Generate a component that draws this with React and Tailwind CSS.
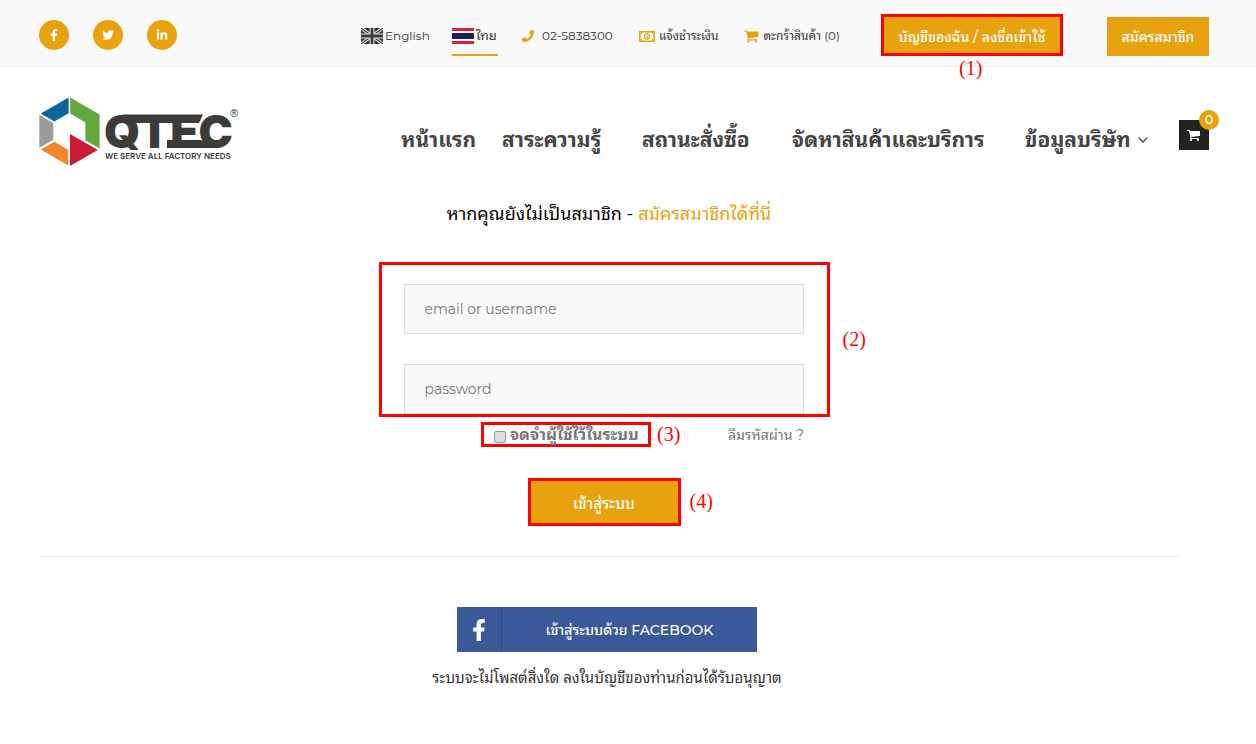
import { FaFacebookF, FaTwitter, FaLinkedinIn, FaPhone } from "react-icons/fa";
import { ChevronDown } from "lucide-react";

const socials = [
  { label: "Facebook", Icon: FaFacebookF },
  { label: "Twitter", Icon: FaTwitter },
  { label: "LinkedIn", Icon: FaLinkedinIn },
];

function CartIcon({ className }) {
  return (
    <svg className={className} viewBox="0 0 1792 1792" fill="currentColor" aria-hidden="true">
      <path d="M640 1536q0 52-38 90t-90 38-90-38-38-90 38-90 90-38 90 38 38 90zm896 0q0 52-38 90t-90 38-90-38-38-90 38-90 90-38 90 38 38 90zm128-1088v512q0 24-16.5 42.5t-40.5 21.5l-1044 122q13 60 13 70 0 16-24 64h920q26 0 45 19t19 45-19 45-45 19h-1024q-26 0-45-19t-19-45q0-11 8-31.5t16-36 21.5-40 15.500-29.5l-177-823h-204q-26 0-45-19t-19-45 19-45 45-19h256q16 0 28.5 6.500t19.500 15.500 13 24.500 8 26 5.500 29.500 4.500 26h1201q26 0 45 19t19 45z" />
    </svg>
  );
}

function UkFlag() {
  return (
    <svg className="h-4 w-[22px] shrink-0" viewBox="0 0 22 16" aria-hidden="true">
      <rect width="22" height="16" fill="#333" />
      <path d="M0 0L22 16M22 0L0 16" stroke="#ddd" strokeWidth="3.4" />
      <path d="M0 0L22 16M22 0L0 16" stroke="#444" strokeWidth="1.1" />
      <path d="M11 0V16M0 8H22" stroke="#e6e6e6" strokeWidth="5" />
      <path d="M11 0V16M0 8H22" stroke="#3a3a3a" strokeWidth="2.8" />
    </svg>
  );
}

function ThaiFlag() {
  return (
    <svg className="h-4 w-[22px] shrink-0" viewBox="0 0 22 16" aria-hidden="true">
      <rect width="22" height="16" fill="#e01f36" />
      <rect y="3" width="22" height="10" fill="#fff" />
      <rect y="5" width="22" height="6" fill="#211f52" />
    </svg>
  );
}

function MoneyIcon() {
  return (
    <svg className="h-[11px] w-4 shrink-0" viewBox="0 0 16 11" fill="none" stroke="#e8a20e" aria-hidden="true">
      <rect x="0.75" y="0.75" width="14.5" height="9.5" strokeWidth="1.5" />
      <ellipse cx="8" cy="5.5" rx="2.4" ry="3" strokeWidth="1.2" />
      <path d="M7.2 4.3L8.2 3.8V7M7 7.1H9.3" strokeWidth="0.9" />
      <path d="M1 3.2Q3 3.2 3 1M13 1Q13 3.2 15 3.2M1 7.8Q3 7.8 3 10M13 10Q13 7.8 15 7.8" />
    </svg>
  );
}

function Logo() {
  return (
    <svg className="h-[72px] w-[202px]" viewBox="0 0 202 72" role="img" aria-label="QTEC">
      <path d="M29.6 1.5V17.2L15.3 25.5L1.8 17.6Z" fill="#0d659c" />
      <path d="M31.2 1.5L60.6 18.5V52.5L46.4 44.3V26.5L31.2 17.5Z" fill="#63a83d" />
      <path d="M0.3 19L14.3 27V44L0.3 51.8Z" fill="#9c9b9c" />
      <path d="M15.3 45.8L29.2 53.8V69.5L1.8 53.6Z" fill="#f18829" />
      <path d="M31 38L58.8 54L31 70Z" fill="#cb1a35" />
      <path d="M84 18.5H164L160 27H80Z" fill="#3b3b3a" />
      <path d="M128 44H162L176 52H128Z" fill="#3b3b3a" />
      <text x="65" y="52" className="font-[Inter,sans-serif] text-[46px] font-black" fill="#3b3b3a">QTEC</text>
      <text x="66" y="63" className="font-[Inter,sans-serif] text-[8px] font-semibold" fill="#3b3b3a">WE SERVE ALL FACTORY NEEDS</text>
      <text x="191" y="21" className="font-['Liberation_Sans',sans-serif] text-[11px]" fill="#3b3b3a">®</text>
    </svg>
  );
}

function Mark({ className, children }) {
  return <span className={`absolute font-['Liberation_Serif',serif] text-xl leading-6 font-normal text-[#f00] ${className}`}>{children}</span>;
}

export default function App() {
  return (
    <div className="min-h-screen bg-white font-[Montserrat,'Noto_Sans_Thai_Looped',Loma,Waree,'Noto_Sans',sans-serif] text-[#333]">
      <header>
        <div className="flex h-[67px] items-start border-b border-[#ebebeb] bg-[#f9f9f9] pr-[47px] pl-[39px]">
          <div className="flex w-[322px] shrink-0 gap-6 pt-5">
            {socials.map(({ label, Icon }) => (
              <a key={label} href="#" aria-label={label} className="flex size-[30px] items-center justify-center rounded-full bg-[#e8a20e] text-white">
                <Icon className="size-3" />
              </a>
            ))}
          </div>
          <nav className="flex h-14 gap-6 pt-[18px] text-xs whitespace-nowrap">
            <a href="#" className="flex h-9 w-[67px] items-center gap-0.5"><UkFlag />English</a>
            <a href="#" className="flex h-[38px] w-[46px] items-center gap-0.5 border-b-2 border-[#e8a20e] text-[13px]"><ThaiFlag />ไทย</a>
            <a href="#" className="flex h-9 w-[93px] items-center gap-2"><FaPhone className="size-3 text-[#e8a20e]" />02-5838300</a>
            <a href="#" className="flex h-9 w-[81px] items-center gap-1"><MoneyIcon />แจ้งชำระเงิน</a>
            <a href="#" className="flex h-9 w-24 items-center gap-1"><CartIcon className="size-4 text-[#e8a20e]" />ตะกร้าสินค้า (0)</a>
          </nav>
          <div className="ml-auto flex shrink-0 items-start gap-11 pt-3.5 text-sm font-medium whitespace-nowrap text-white">
            <div className="relative">
              <button className="h-[42px] w-[182px] border-3 border-[#f00] bg-[#e8a20e] pt-1">บัญชีของฉัน / ลงชื่อเข้าใช้</button>
              <Mark className="top-[42px] left-[78px]">(1)</Mark>
            </div>
            <button className="mt-[3px] h-[39px] w-[102px] bg-[#e8a20e]">สมัครสมาชิก</button>
          </div>
        </div>
        <div className="flex items-start justify-between pt-[29px] pr-[47px] pl-[39px]">
          <a href="#"><Logo /></a>
          <div className="flex items-start pt-6">
            <nav className="flex h-10 items-center text-[21px] leading-9 font-bold whitespace-nowrap text-[#444]">
              <a href="#" className="w-[101px]">หน้าแรก</a>
              <a href="#" className="w-[140px]">สาระความรู้</a>
              <a href="#" className="w-[150px]">สถานะสั่งซื้อ</a>
              <a href="#" className="w-[233px]">จัดหาสินค้าและบริการ</a>
              <a href="#" className="flex w-[154px] items-center gap-1">ข้อมูลบริษัท <ChevronDown className="size-4" /></a>
            </nav>
            <a href="#" aria-label="ตะกร้าสินค้า" className="relative flex size-[30px] items-center justify-center bg-[#222] text-white">
              <CartIcon className="size-3.5" />
              <span className="absolute -top-2.5 -right-2.5 flex size-5 items-center justify-center rounded-full bg-[#e8a20e] text-[13px] font-medium">0</span>
            </a>
          </div>
        </div>
      </header>
      <main className="pr-[77px] pl-[39px]">
        <p className="pt-8 text-center text-lg leading-7 text-black">
          หากคุณยังไม่เป็นสมาชิก - <a href="#" className="text-[#e8a20e]">สมัครสมาชิกได้ที่นี่</a>
        </p>
        <form className="flex flex-col items-center border-b border-[#ebebeb] pt-[34px] pr-2.5 pb-[30px] text-sm text-[#777]">
          <div className="relative flex h-[155px] w-[451px] flex-col gap-[30px] border-3 border-[#f00] pt-[19px] pr-[23px] pl-[22px]">
            <input aria-label="email or username" placeholder="email or username" className="h-[50px] w-full shrink-0 border border-[#ddd] bg-[#f9f9f9] px-5 placeholder:text-[#777]" />
            <input aria-label="password" type="password" placeholder="password" className="h-[50px] w-full shrink-0 border border-[#ddd] bg-[#f9f9f9] px-5 placeholder:text-[#777]" />
            <Mark className="top-[62px] left-[461px]">(2)</Mark>
          </div>
          <div className="mt-[5px] flex w-[400px] items-center justify-between pl-[77px] whitespace-nowrap">
            <div className="relative">
              <label className="flex h-[25px] w-[170px] items-center gap-1 border-3 border-[#f00] pl-2.5 text-base leading-5 font-bold">
                <input type="checkbox" className="mt-1 size-3 appearance-none rounded-xs border border-[#999] bg-[#ddd]" />
                จดจำผู้ใช้ไว้ในระบบ
              </label>
              <Mark className="top-0 left-[176px]">(3)</Mark>
            </div>
            <a href="#">ลืมรหัสผ่าน ?</a>
          </div>
          <div className="relative mt-[31px]">
            <button type="button" className="block h-12 w-[153px] border-3 border-[#f00] bg-[#e8a20e] pt-1 text-[15px] font-medium text-white">เข้าสู่ระบบ</button>
            <Mark className="top-[11px] left-[162px]">(4)</Mark>
          </div>
        </form>
        <section className="flex flex-col items-center pt-[50px] pr-1">
          <button className="flex h-[45px] w-[300px] items-stretch bg-[#3b5998] text-sm font-medium text-white">
            <span className="flex w-[45px] items-center justify-center border-r border-[#2d4a86]"><FaFacebookF className="size-[22px]" /></span>
            <span className="flex flex-1 items-center justify-center">เข้าสู่ระบบด้วย FACEBOOK</span>
          </button>
          <p className="pt-3.5 text-[15px] leading-6">ระบบจะไม่โพสต์สิ่งใด ลงในบัญชีของท่านก่อนได้รับอนุญาต</p>
        </section>
      </main>
    </div>
  );
}
